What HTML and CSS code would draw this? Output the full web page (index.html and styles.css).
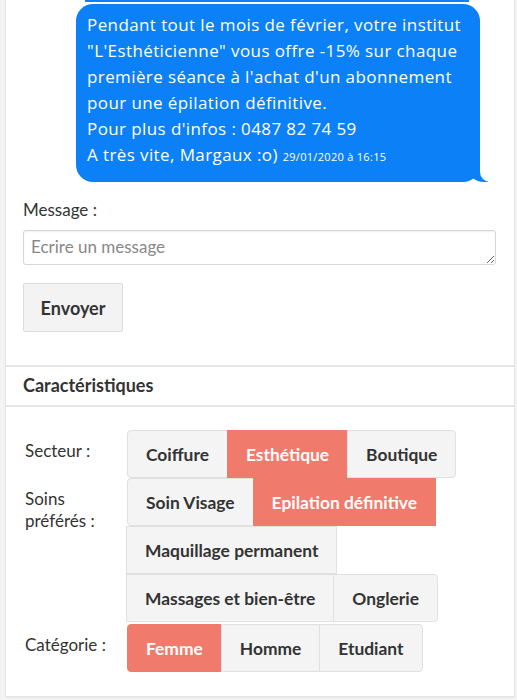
FILE: index.html
```html
<!DOCTYPE html>
<html lang="fr">
<head>
    <meta charset="UTF-8">
    <meta name="viewport" content="width=device-width, initial-scale=1.0">
    <title>Fiche client</title>
    <link rel="stylesheet" href="styles.css">
</head>
<body>

    <div class="card">
        <section class="chat">
            <div class="msg-prev"></div>
            <div class="bubble">
                Pendant tout le mois de février, votre institut "L'Esthéticienne" vous offre -15% sur chaque première séance à l'achat d'un abonnement pour une épilation définitive.<br>
                Pour plus d'infos : 0487 82 74 59<br>
                A très vite, Margaux :o) <span class="time">29/01/2020 à 16:15</span>
            </div>

            <form class="reply">
                <label class="reply-label" for="message">Message :</label>
                <textarea id="message" placeholder="Ecrire un message"></textarea>
                <button type="button" class="btn-send">Envoyer</button>
            </form>
        </section>

        <section class="panel">
            <h3 class="panel-title">Caractéristiques</h3>
            <div class="panel-body">
                <div class="field">
                    <div class="field-label">Secteur :</div>
                    <div class="choices">
                        <button class="choice">Coiffure</button>
                        <button class="choice active">Esthétique</button>
                        <button class="choice">Boutique</button>
                    </div>
                </div>
                <div class="field">
                    <div class="field-label">Soins préférés :</div>
                    <div class="choices">
                        <button class="choice">Soin Visage</button>
                        <button class="choice active">Epilation définitive</button>
                        <button class="choice">Maquillage permanent</button>
                        <button class="choice">Massages et bien-être</button>
                        <button class="choice">Onglerie</button>
                    </div>
                </div>
                <div class="field field-last">
                    <div class="field-label">Catégorie :</div>
                    <div class="choices">
                        <button class="choice active">Femme</button>
                        <button class="choice">Homme</button>
                        <button class="choice">Etudiant</button>
                    </div>
                </div>
            </div>
        </section>
    </div>

</body>
</html>
```

FILE: styles.css
```css
body {
    margin: 0;
    background: #f3f3f4;
    font-family: Lato, "Open Sans", sans-serif;
    color: #333;
}
.card {
    margin: 0 2px 0 5px;
    background: white;
    border-left: 1px solid #e3e3e3;
    border-right: 1px solid #e3e3e3;
    border-bottom: 2px solid #e6e6e6;
    height: 698px;
    box-sizing: border-box;
    overflow: hidden;
}
.chat {
    padding: 0 18px 33px 17px;
}
.msg-prev {
    height: 2px;
    margin: 0 27px 0 62px;
    background: #0b80f7;
}
.bubble {
    position: relative;
    margin: 2px 0 0 53px;
    width: 404px;
    box-sizing: border-box;
    padding: 8px 10px 12px 11px;
    background: #0b80f7;
    color: white;
    border-radius: 17px;
    font-family: "Open Sans", sans-serif;
    font-size: 17px;
    letter-spacing: 0.4px;
    line-height: 26px;
}
.bubble:before {
    content: "";
    position: absolute;
    bottom: 0;
    right: -8px;
    height: 20px;
    border-right: 20px solid #0b80f7;
    border-bottom-left-radius: 16px 14px;
}
.bubble:after {
    content: "";
    position: absolute;
    bottom: 0;
    right: -26px;
    width: 26px;
    height: 20px;
    background: white;
    border-bottom-left-radius: 10px;
}
.time {
    font-size: 11px;
    letter-spacing: 0.3px;
}
.reply {
    display: flex;
    flex-direction: column;
    align-items: flex-start;
    margin-top: 18px;
}
.reply-label {
    font-size: 17px;
    line-height: 20px;
}
.reply textarea {
    margin-top: 10px;
    width: 100%;
    height: 35px;
    box-sizing: border-box;
    padding: 6px 7px;
    border: 1px solid #d6d6d6;
    border-radius: 3px;
    box-shadow: inset 0 1px 2px rgba(0, 0, 0, 0.06);
    font-family: Lato, sans-serif;
    font-size: 17px;
    line-height: 20px;
    color: #333;
}
.reply textarea::placeholder {
    color: #888;
}
.btn-send {
    margin-top: 18px;
    width: 100px;
    height: 49px;
    background: #f3f3f3;
    border: 1px solid #dcdcdc;
    border-radius: 2px;
    font-family: Lato, sans-serif;
    font-weight: bold;
    font-size: 18px;
    color: #333;
}
.panel-title {
    margin: 0;
    padding: 0 17px;
    height: 38px;
    line-height: 36px;
    border-top: 2px solid #e6e6e6;
    border-bottom: 2px solid #e6e6e6;
    font-size: 18px;
    font-weight: bold;
}
.panel-body {
    padding: 23px 18px 24px 19px;
}
.field {
    display: flex;
}
.field-last {
    margin-top: 2px;
}
.field-label {
    width: 102px;
    flex-shrink: 0;
    box-sizing: border-box;
    padding: 10px 20px 0 0;
    font-size: 17px;
    line-height: 22px;
}
.choices {
    display: flex;
    flex-wrap: wrap;
    flex: 1;
}
.choice {
    height: 48px;
    padding: 0 18px;
    margin-left: -1px;
    background: #f4f4f4;
    border: 1px solid #e0e0e0;
    font-family: Lato, sans-serif;
    font-weight: bold;
    font-size: 17.4px;
    color: #333;
    cursor: pointer;
}
.choice:first-child {
    margin-left: 0;
    border-radius: 4px 0 0 4px;
}
.choice:last-child {
    border-radius: 0 4px 4px 0;
}
.choice.active {
    background: #f07a6b;
    border-color: #f07a6b;
    color: white;
}
```
